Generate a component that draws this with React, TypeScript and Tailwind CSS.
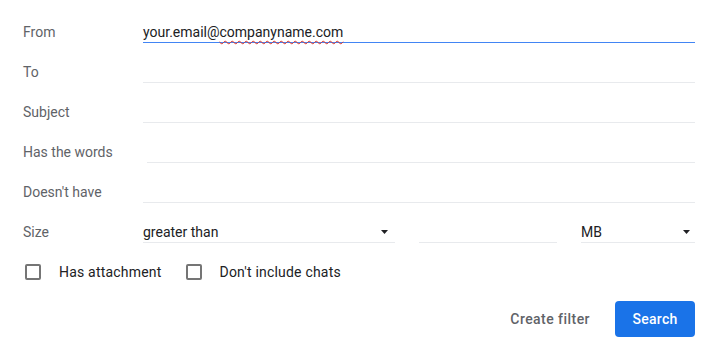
import React from "react";

function Arrow() {
  return (
    <svg width="7" height="4" viewBox="0 0 7 4" className="shrink-0">
      <path d="M0 0 L7 0 L3.5 4 Z" fill="#202124" />
    </svg>
  );
}

function Row({ label, children }: { label: string; children?: React.ReactNode }) {
  return (
    <div className="flex h-10 items-end">
      <div className="w-[120px] shrink-0 leading-[20px] mb-[1px] text-[#5f6368]">{label}</div>
      {children}
    </div>
  );
}

function Field({ active, className = "" }: { active?: boolean; className?: string }) {
  return (
    <div
      className={`flex-1 h-[21px] border-b leading-[20px] ${
        active ? "border-[#4285f4]" : "border-[#e8eaed]"
      } ${className}`}
    />
  );
}

function Checkbox({ label }: { label: string }) {
  return (
    <div className="flex items-center">
      <div className="w-4 h-4 rounded-[2px] border-2 border-[#757575] box-border" />
      <span className="ml-[18px] text-[#202124] tracking-[0.2px]">{label}</span>
    </div>
  );
}

export default function App() {
  return (
    <div className="w-[718px] h-[359px] bg-white font-[Roboto,sans-serif] text-[14px] pt-[3px] pl-[23px] pr-[23px]">
      <Row label="From">
        <div className="flex-1 h-[21px] border-b border-[#4285f4] leading-[20px] text-[#202124]">
          your.email@
          <span className="underline decoration-wavy decoration-[#d93025] decoration-1 underline-offset-[3px]">
            companyname.com
          </span>
        </div>
      </Row>
      <Row label="To">
        <Field />
      </Row>
      <Row label="Subject">
        <Field />
      </Row>
      <Row label="Has the words">
        <Field className="ml-[4px]" />
      </Row>
      <Row label="Doesn't have">
        <Field />
      </Row>
      <Row label="Size">
        <div className="flex flex-1 items-end gap-6">
          <div className="w-[252px] h-[21px] border-b border-[#e8eaed] leading-[20px] text-[#202124] flex items-center justify-between pr-[7px]">
            <span>greater than</span>
            <Arrow />
          </div>
          <div className="w-[138px] h-[21px] border-b border-[#e8eaed]" />
          <div className="flex-1 h-[21px] border-b border-[#e8eaed] leading-[20px] text-[#202124] flex items-center justify-between pr-[5px]">
            <span>MB</span>
            <Arrow />
          </div>
        </div>
      </Row>
      <div className="flex items-center h-10 mt-[9px] pl-[2px] gap-[24px]">
        <Checkbox label="Has attachment" />
        <Checkbox label="Don't include chats" />
      </div>
      <div className="flex justify-end items-center mt-[9px]">
        <button className="px-3 h-9 text-[#5f6368] font-medium tracking-[0.45px] mr-[13px]">
          Create filter
        </button>
        <button className="w-20 h-9 rounded-[4px] bg-[#1a73e8] text-white font-medium tracking-[0.3px]">
          Search
        </button>
      </div>
    </div>
  );
}
